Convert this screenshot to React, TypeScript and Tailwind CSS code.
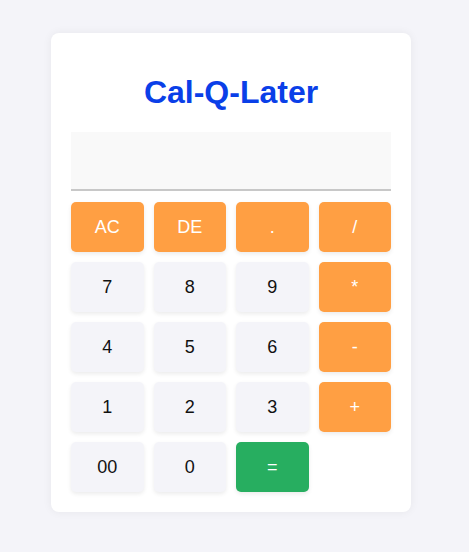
import React from "react";

const keys: { label: string; kind: "op" | "num" | "eq" }[] = [
  { label: "AC", kind: "op" },
  { label: "DE", kind: "op" },
  { label: ".", kind: "op" },
  { label: "/", kind: "op" },
  { label: "7", kind: "num" },
  { label: "8", kind: "num" },
  { label: "9", kind: "num" },
  { label: "*", kind: "op" },
  { label: "4", kind: "num" },
  { label: "5", kind: "num" },
  { label: "6", kind: "num" },
  { label: "-", kind: "op" },
  { label: "1", kind: "num" },
  { label: "2", kind: "num" },
  { label: "3", kind: "num" },
  { label: "+", kind: "op" },
  { label: "00", kind: "num" },
  { label: "0", kind: "num" },
  { label: "=", kind: "eq" },
];

export default function App() {
  return (
    <div
      className="min-h-[552px] w-full bg-[#f4f4f9] flex justify-start pl-[51px] pt-[33px]"
      style={{ fontFamily: '"Liberation Sans", Arial, sans-serif' }}
    >
      <div className="w-[360px] h-[479px] bg-white rounded-[8px] shadow-[0_0_10px_rgba(0,0,0,0.06)] px-[20px] pt-[20px]">
        <h1 className="text-[32px] leading-[37px] font-bold text-[#0a3fe8] text-center mt-[21px] mb-[21px]">
          Cal-Q-Later
        </h1>
        <div className="h-[59px] bg-[#f9f9f9] border-b-2 border-[#c8c8c8]" />
        <div className="grid grid-cols-4 gap-[10px] mt-[11px]">
          {keys.map((k) => (
            <button
              key={k.label}
              className={
                "h-[50px] rounded-[5px] text-[18px] shadow-[0_2px_4px_rgba(0,0,0,0.08)] " +
                (k.kind === "op"
                  ? "bg-[#ff9f43] text-white"
                  : k.kind === "eq"
                  ? "bg-[#27ae60] text-white"
                  : "bg-[#f4f4f9] text-[#111]")
              }
            >
              {k.label}
            </button>
          ))}
        </div>
      </div>
    </div>
  );
}
